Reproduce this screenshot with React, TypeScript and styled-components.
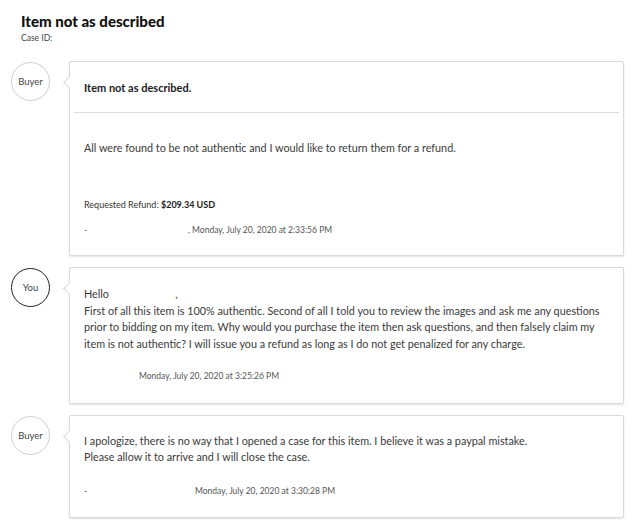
import styled, { createGlobalStyle } from 'styled-components'

const GlobalStyle = createGlobalStyle`
  html, body {
    margin: 0;
    padding: 0;
    background: #ffffff;
  }
  body {
    font-family: Lato, "Liberation Sans", sans-serif;
    color: #333333;
  }
`

const Page = styled.div`
  width: 640px;
  height: 524px;
  overflow: hidden;
  padding: 12px 16px 0 11px;
  box-sizing: border-box;
`

const Header = styled.div`
  padding-left: 10px;
  margin-bottom: 17px;
`

const Title = styled.h1`
  margin: 0;
  font-size: 15px;
  font-weight: 900;
  color: #111111;
  line-height: 18px;
`

const CaseId = styled.div`
  font-size: 8.5px;
  color: #444444;
  margin-top: 3px;
  line-height: 11px;
`

const Thread = styled.div`
  display: flex;
  flex-direction: column;
  gap: 11px;
`

const Row = styled.div`
  display: flex;
  align-items: flex-start;
  gap: 19px;
`

const Avatar = styled.div<{ $you?: boolean }>`
  flex: none;
  width: 39px;
  height: 39px;
  margin-top: 1px;
  border-radius: 50%;
  box-sizing: border-box;
  border: ${p => (p.$you ? '1.5px solid #222222' : '1.5px solid #cfcfcf')};
  display: flex;
  align-items: center;
  justify-content: center;
  font-size: 9.5px;
  color: #444444;
`

const Card = styled.div`
  position: relative;
  flex: 1;
  background: #ffffff;
  border: 1px solid #d9d9d9;
  border-radius: 2px;
  box-shadow: 0 1px 2px rgba(0, 0, 0, 0.12);
  &::before {
    content: '';
    position: absolute;
    left: -5px;
    top: 16px;
    width: 8px;
    height: 8px;
    background: #ffffff;
    border-left: 1px solid #d9d9d9;
    border-bottom: 1px solid #d9d9d9;
    transform: rotate(45deg);
  }
`

const CardHead = styled.div`
  margin: 0 4px;
  height: 50px;
  display: flex;
  align-items: center;
  padding-left: 10px;
  border-bottom: 1px solid #dcdcdc;
  font-size: 11px;
  font-weight: 700;
  color: #222222;
`

const CardBody = styled.div<{ $top: number; $bottom: number }>`
  padding: ${p => p.$top}px 12px ${p => p.$bottom}px 14px;
`

const Text = styled.p<{ $lh?: number }>`
  margin: 0;
  font-size: 10.8px;
  line-height: ${p => p.$lh ?? 16.4}px;
  color: #3a3a3a;
`

const Refund = styled.div`
  margin-top: 43px;
  font-size: 9px;
  line-height: 12px;
  color: #333333;
  b {
    font-weight: 700;
    color: #222222;
  }
`

const Stamp = styled.div<{ $gap: number; $top: number }>`
  display: flex;
  margin-top: ${p => p.$top}px;
  font-size: 8.5px;
  line-height: 12px;
  color: #555555;
  span:first-child {
    width: ${p => p.$gap}px;
  }
`

export default function App() {
  return (
    <Page>
      <GlobalStyle />
      <Header>
        <Title>Item not as described</Title>
        <CaseId>Case ID:</CaseId>
      </Header>
      <Thread>
        <Row>
          <Avatar>Buyer</Avatar>
          <Card>
            <CardHead>Item not as described.</CardHead>
            <CardBody $top={27} $bottom={19}>
              <Text>All were found to be not authentic and I would like to return them for a refund.</Text>
              <Refund>
                Requested Refund: <b>$209.34 USD</b>
              </Refund>
              <Stamp $gap={104} $top={13}>
                <span>-</span>
                <span>, Monday, July 20, 2020 at 2:33:56 PM</span>
              </Stamp>
            </CardBody>
          </Card>
        </Row>
        <Row>
          <Avatar $you>You</Avatar>
          <Card>
            <CardBody $top={18} $bottom={21}>
              <Text>Hello&nbsp;&nbsp;&nbsp;&nbsp;&nbsp;&nbsp;&nbsp;&nbsp;&nbsp;&nbsp;&nbsp;&nbsp;&nbsp;&nbsp;&nbsp;&nbsp;&nbsp;&nbsp;&nbsp;&nbsp;&nbsp;&nbsp;&nbsp;&nbsp;,</Text>
              <Text>
                First of all this item is 100% authentic. Second of all I told you to review the images and ask me any questions
                prior to bidding on my item. Why would you purchase the item then ask questions, and then falsely claim my item
                is not authentic? I will issue you a refund as long as I do not get penalized for any charge.
              </Text>
              <Stamp $gap={55} $top={18}>
                <span></span>
                <span>Monday, July 20, 2020 at 3:25:26 PM</span>
              </Stamp>
            </CardBody>
          </Card>
        </Row>
        <Row>
          <Avatar>Buyer</Avatar>
          <Card>
            <CardBody $top={17} $bottom={20}>
              <Text $lh={16}>
                I apologize, there is no way that I opened a case for this item. I believe it was a paypal mistake.
                <br />
                Please allow it to arrive and I will close the case.
              </Text>
              <Stamp $gap={111} $top={20}>
                <span>-</span>
                <span>Monday, July 20, 2020 at 3:30:28 PM</span>
              </Stamp>
            </CardBody>
          </Card>
        </Row>
      </Thread>
    </Page>
  )
}
